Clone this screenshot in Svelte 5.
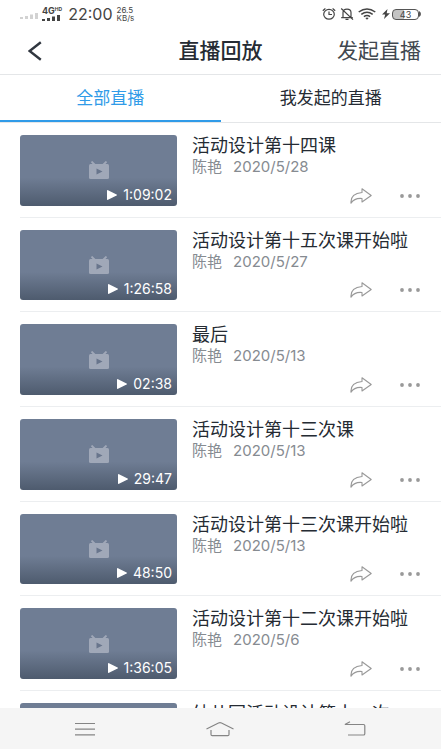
<script>
  const lessons = [
    { title: '活动设计第十四课', host: '陈艳', date: '2020/5/28', length: '1:09:02' },
    { title: '活动设计第十五次课开始啦', host: '陈艳', date: '2020/5/27', length: '1:26:58' },
    { title: '最后', host: '陈艳', date: '2020/5/13', length: '02:38' },
    { title: '活动设计第十三次课', host: '陈艳', date: '2020/5/13', length: '29:47' },
    { title: '活动设计第十三次课开始啦', host: '陈艳', date: '2020/5/13', length: '48:50' },
    { title: '活动设计第十二次课开始啦', host: '陈艳', date: '2020/5/6', length: '1:36:05' },
    { title: '幼儿园活动设计第十一次', host: '', date: '', length: '' }
  ];
  const tabs = ['全部直播', '我发起的直播'];
  let active = $state(0);
</script>

<div class="screen">
  <div class="status">
    <svg class="dim" width="18" height="8" viewBox="0 0 18 8" fill="#d2d2d2" aria-hidden="true">
      <path d="M0 5h3v2H0zM5 4h3v3H5zM10 2.500h3V7h-3zM15 1h3v6h-3z" />
    </svg>
    <div class="network">
      <span class="gen">4G<sup>HD</sup></span>
      <svg width="18" height="7" viewBox="0 0 18 7" fill="#444" aria-hidden="true">
        <path d="M0 4h3v2H0zM5 3h3v3H5zM10 1.500h3V6h-3zM15 0h3v6h-3z" />
      </svg>
    </div>
    <span class="clock">22:00</span>
    <div class="speed"><span>26.5</span><span>KB/s</span></div>
    <div class="indicators">
      <svg width="14" height="14" viewBox="0 0 14 14" fill="none" stroke="#444" stroke-width="1.200" aria-hidden="true">
        <ellipse cx="7" cy="7.300" rx="5.300" ry="4.900" />
        <path d="M7 4.500v3h3M.8 3.800 3.400 1.500M13.200 3.800 10.600 1.500" />
      </svg>
      <svg width="14" height="14" viewBox="0 0 14 14" fill="none" stroke="#444" stroke-width="1.200" aria-hidden="true">
        <path d="M3 10.500V5.500Q3 2.200 7 2.200T11 5.500V10.500M1.200 10.600H12.800M5.500 12.400h3M1.200 1.500 13 12.600" />
      </svg>
      <svg width="18" height="12" viewBox="0 0 18 12" fill="none" stroke="#444" stroke-width="1.500" aria-hidden="true">
        <path d="M.7 4Q9-2.200 17.300 4M3.300 6.400Q9 2 14.700 6.400M5.900 8.700Q9 6.300 12.100 8.700" />
        <path d="M7.300 10 9 11.700 10.700 10Q9 9 7.300 10Z" fill="#444" stroke="none" />
      </svg>
      <div class="battery">
        <svg width="8" height="10" viewBox="0 0 8 10" fill="#444" aria-hidden="true">
          <path d="M5.500 0 0 5.600h3.200L2 10l6-5.800H4.700z" />
        </svg>
        <span class="cell">43</span>
        <svg width="2" height="6" viewBox="0 0 2 6" fill="#555" aria-hidden="true">
          <path d="M0 0q2 1 2 3t-2 3z" />
        </svg>
      </div>
    </div>
  </div>

  <header>
    <button class="back" aria-label="返回">
      <svg width="14" height="20" viewBox="0 0 14 20" fill="none" stroke="#30363f" stroke-width="2.400" aria-hidden="true">
        <path d="M12.800 1.200 1.600 10l11.200 8.800" />
      </svg>
    </button>
    <h1>直播回放</h1>
    <button class="start">发起直播</button>
  </header>

  <div class="tabs" role="tablist">
    {#each tabs as tab, i}
      <button role="tab" aria-selected={active === i} class:active={active === i} onclick={() => (active = i)}>{tab}</button>
    {/each}
  </div>

  <main>
    <ul>
      {#each lessons as lesson}
        <li>
          <div class="thumb">
            <svg class="tv" width="20" height="18" viewBox="0 0 20 18" aria-hidden="true">
              <path d="M2.500 .5 6 4M17.500 .5 14 4" stroke="#a0a8b8" stroke-width="1.800" />
              <rect y="3" width="20" height="15" rx="1.500" fill="#a0a8b8" />
              <path d="M7.500 7.500v6l6-3z" fill="#68758c" />
            </svg>
            {#if lesson.length}
              <span class="length">
                <svg width="10" height="10" viewBox="0 0 10 10" fill="#fff" aria-hidden="true">
                  <path d="M0 .8Q0-.3 1 .2L9.600 4.500q.8.500 0 1L1 9.800Q0 10.300 0 9.200z" />
                </svg>
                {lesson.length}
              </span>
            {/if}
          </div>
          <div class="info">
            <h2>{lesson.title}</h2>
            <p><span>{lesson.host}</span><span>{lesson.date}</span></p>
            <div class="actions">
              <button aria-label="分享">
                <svg width="22" height="16" viewBox="0 0 22 16" fill="none" stroke="#999" stroke-width="1.100" stroke-linejoin="round" aria-hidden="true">
                  <path d="M12 .8 21.200 7.500 12 14V10.500Q4.500 9.800 1 15.200 .2 5.500 12 4.500Z" />
                </svg>
              </button>
              <button aria-label="更多">
                <svg width="22" height="4" viewBox="0 0 22 4" fill="#999" aria-hidden="true">
                  <circle cx="3" cy="2" r="1.900" /><circle cx="11" cy="2" r="1.900" /><circle cx="19" cy="2" r="1.900" />
                </svg>
              </button>
            </div>
          </div>
        </li>
      {/each}
    </ul>
  </main>

  <nav>
    <button aria-label="菜单">
      <svg width="20" height="14" viewBox="0 0 20 14" stroke="#858585" stroke-width="1.200" aria-hidden="true">
        <path d="M0 1.500h20M0 7.200h20M0 12.800h20" />
      </svg>
    </button>
    <button aria-label="主页">
      <svg width="28" height="16" viewBox="0 0 28 16" fill="none" stroke="#858585" stroke-width="1.200" aria-hidden="true">
        <path d="M.5 8 12.500 2Q14 1.300 15.500 2l12 6M5 9v4.500q0 1.200 1.200 1.200H21.800q1.200 0 1.200-1.200V9" />
      </svg>
    </button>
    <button aria-label="后退">
      <svg width="22" height="16" viewBox="0 0 22 16" fill="none" stroke="#858585" stroke-width="1.200" aria-hidden="true">
        <path d="M6 .8.900 3.500H19.500q1.300 0 1.300 1.300v7.900q0 1.300-1.300 1.300H4" />
      </svg>
    </button>
  </nav>
</div>

<style>
  .screen {
    display: flex;
    flex-direction: column;
    height: 100vh;
    overflow: hidden;
    background: #fff;
    color: #252b33;
    font-family: Inter, "Noto Sans CJK SC", sans-serif;
  }
  button {
    border: 0;
    padding: 0;
    background: none;
    color: inherit;
    font: inherit;
    cursor: pointer;
  }
  svg {
    display: block;
    flex: none;
  }
  .status {
    display: flex;
    flex: none;
    align-items: center;
    height: 28px;
    padding: 0 20px;
    color: #444;
  }
  .dim {
    margin-top: 4px;
  }
  .network {
    margin: 0 6px 0 4px;
  }
  .gen {
    display: flex;
    font-size: 9px;
    line-height: 8px;
    font-weight: 700;
  }
  .gen sup {
    font-size: 5px;
    line-height: 5px;
  }
  .clock {
    font-size: 16px;
    line-height: 28px;
  }
  .speed {
    display: flex;
    flex-direction: column;
    margin-left: 4px;
    font-size: 8px;
    line-height: 8px;
  }
  .indicators {
    display: flex;
    align-items: center;
    gap: 4px;
    margin-left: auto;
  }
  .battery {
    display: flex;
    align-items: center;
    margin-left: 2px;
  }
  .cell {
    width: 25px;
    margin-left: 2px;
    border: 1px solid #555;
    border-radius: 4px;
    background: linear-gradient(90deg, #c4c4c4 43%, #fff 43%);
    font-size: 9px;
    line-height: 9px;
    text-align: center;
  }
  header {
    display: grid;
    grid-template-columns: 1fr auto 1fr;
    flex: none;
    align-items: center;
    height: 46px;
    padding: 0 20px 0 28px;
    border-bottom: 1px solid #e4e6e8;
  }
  .back {
    justify-self: start;
  }
  h1 {
    margin: 0 0 0 -8px;
    font-size: 21px;
    line-height: 28px;
    font-weight: 500;
  }
  .start {
    justify-self: end;
    color: #414850;
    font-size: 21px;
    line-height: 28px;
  }
  .tabs {
    display: flex;
    flex: none;
    height: 47px;
    border-bottom: 1px solid #e4e6e8;
  }
  .tabs button {
    flex: 1;
    padding-top: 2px;
    border-bottom: 2px solid transparent;
    font-size: 17px;
    line-height: 43px;
  }
  .tabs .active {
    border-color: #309be8;
    color: #309be8;
  }
  main {
    flex: 1;
    min-height: 0;
    overflow: hidden;
  }
  ul {
    margin: 0;
    padding: 0 0 0 20px;
    list-style: none;
  }
  li {
    display: flex;
    gap: 15px;
    padding: 12px 20px 11px 0;
    border-bottom: 1px solid #eceef0;
  }
  .thumb {
    display: grid;
    place-items: center;
    position: relative;
    flex: none;
    width: 157px;
    aspect-ratio: 20 / 9;
    border-radius: 3px;
    background: linear-gradient(#6f7d94 60%, #4e5b6e);
  }
  .length {
    display: flex;
    align-items: center;
    gap: 6px;
    position: absolute;
    right: 5px;
    bottom: 3px;
    color: #fff;
    font-size: 14px;
    line-height: 16px;
    white-space: nowrap;
  }
  .info {
    display: flex;
    flex: 1;
    flex-direction: column;
    min-width: 0;
  }
  h2 {
    margin: 0;
    font-size: 18px;
    line-height: 22px;
    font-weight: 400;
    white-space: nowrap;
  }
  p {
    display: flex;
    gap: 11px;
    margin: 0;
    color: #868b91;
    font-size: 15px;
    line-height: 20px;
  }
  .actions {
    display: flex;
    align-items: center;
    justify-content: flex-end;
    gap: 27px;
    height: 20px;
    margin-top: auto;
  }
  nav {
    display: flex;
    flex: none;
    justify-content: space-between;
    align-items: center;
    height: 41px;
    padding: 0 75px;
    background: #f5f5f5;
  }
</style>
